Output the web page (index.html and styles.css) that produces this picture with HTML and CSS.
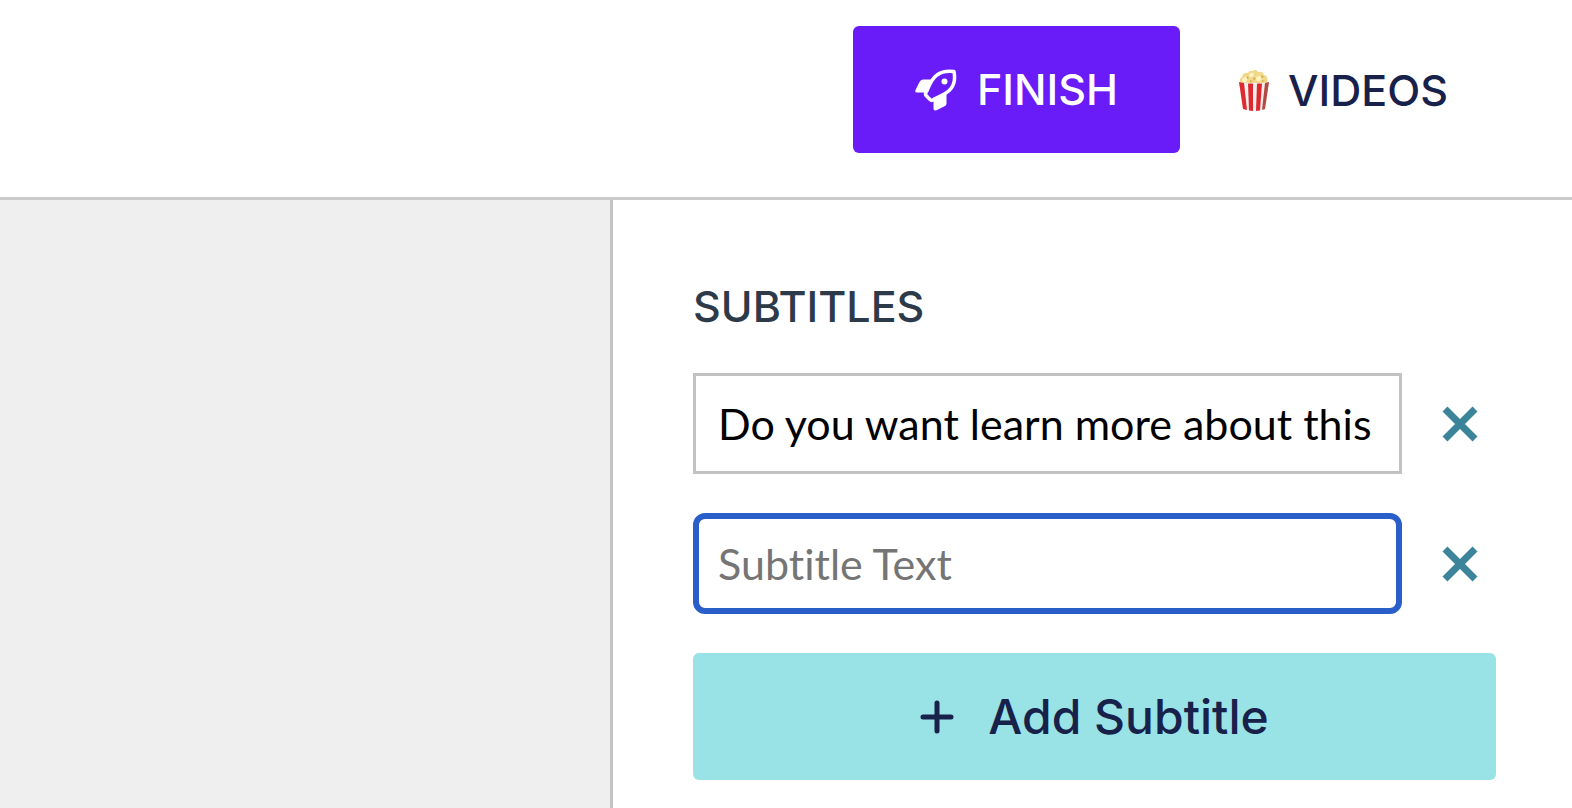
FILE: index.html
```html
<!DOCTYPE html>
<html lang="en">
<head>
    <meta charset="UTF-8">
    <meta name="viewport" content="width=device-width, initial-scale=1.0">
    <title>Subtitles</title>
    <link rel="stylesheet" href="styles.css">
</head>
<body>
    <header class="header">
        <button type="button" class="btn btn-finish">
            <svg class="icon-rocket" viewBox="0 0 42 42" aria-hidden="true">
                <path fill="#fff" d="M8 10.500h11L13 23.500H2Q-.5 23.500.5 21L4.500 13Q5.700 10.500 8 10.500zM31.500 23.500v11Q31.500 36.300 30 37L21 41.500Q18.500 42 18.500 39.500V29z"/>
                <path fill="#691cf7" stroke="#fff" stroke-width="3.500" stroke-linejoin="round" d="M39 2.500Q41 13 36 19.500C32 25 25 27 19 30Q17 32.500 15 30.500L11.500 27Q9.500 25 11.500 22.500C14.500 16 17 9 22 6Q28.500 1 39 2.500z"/>
                <circle cx="29.500" cy="12.500" r="3" fill="#fff"/>
            </svg>
            <span>FINISH</span>
        </button>
        <a href="#" class="videos-link">
            <svg class="icon-popcorn" viewBox="0 0 32 42" aria-hidden="true">
                <path fill="#f1d98c" d="M3 14Q0 10 4 8Q5 3 10 4Q11 1 15 2Q18-1 20 3Q25 2 26 6Q31 7 29 14z"/>
                <path fill="#fff3bf" d="M4 11a3 3 0 0 1 5-2 3 3 0 0 1-4 4zM11 6a3 3 0 0 1 5-1 3 3 0 0 1-4 3zM18 9a3 3 0 0 1 5-1 3 3 0 0 1-4 4z"/>
                <path fill="#d3a84c" d="M9 7l2 2-2 1zM16 8l2 2-3 1zM24 6l2 2-3 1zM12 11l3 1-3 1zM24 11l3 1-3 1z"/>
                <path fill="#f5eeee" d="M1 13Q16 16 31 13L27 40Q16 43 5 40z"/>
                <path fill="#dc2a2e" d="M1 13l5 1 3 27-4-1zM10 14.500h5V42l-4-.5zM19 14.500h5L22 41.500l-4 .5z"/>
                <path fill="#b34a40" d="M27 14l4-1-4 27-3 1z"/>
            </svg>
            <span>VIDEOS</span>
        </a>
    </header>

    <main class="main-content">
        <div class="canvas"></div>

        <!-- Subtitle list -->
        <section class="panel">
            <h2>SUBTITLES</h2>
            <form class="subtitle-form">
                <div class="subtitle-row">
                    <input type="text" class="subtitle-input" aria-label="Subtitle 1" value="Do you want learn more about this">
                    <button type="button" class="btn-remove" aria-label="Remove subtitle 1">
                        <svg viewBox="0 0 36 36" aria-hidden="true"><path d="M3 3l30 30M33 3L3 33"/></svg>
                    </button>
                </div>
                <div class="subtitle-row">
                    <input type="text" class="subtitle-input active" aria-label="Subtitle 2" placeholder="Subtitle Text">
                    <button type="button" class="btn-remove" aria-label="Remove subtitle 2">
                        <svg viewBox="0 0 36 36" aria-hidden="true"><path d="M3 3l30 30M33 3L3 33"/></svg>
                    </button>
                </div>
                <button type="button" class="btn btn-add">
                    <svg class="icon-plus" viewBox="0 0 34 34" aria-hidden="true"><path d="M3 17h28M17 3v28"/></svg>
                    <span>Add Subtitle</span>
                </button>
            </form>
        </section>
    </main>
</body>
</html>
```

FILE: styles.css
```css
* { margin: 0; padding: 0; box-sizing: border-box; }
body {
    font-family: Inter, sans-serif;
    background: #fff;
    color: #17214a;
    min-height: 100vh;
    display: flex;
    flex-direction: column;
}
.header {
    display: flex;
    justify-content: flex-end;
    align-items: center;
    gap: 58px;
    padding: 26px 124px 44px 24px;
    border-bottom: 3px solid #cbcbcb;
}
.btn {
    display: flex;
    align-items: center;
    justify-content: center;
    border: none;
    border-radius: 6px;
    font-family: inherit;
    font-weight: 500;
    line-height: 55px;
    padding: 36px 62px;
    cursor: pointer;
}
.btn-finish {
    background: #691cf7;
    color: #fff;
    font-size: 43px;
    gap: 20px;
}
.icon-rocket { width: 42px; height: 42px; }
.videos-link {
    display: flex;
    align-items: center;
    gap: 18px;
    color: #17214a;
    font-size: 43px;
    font-weight: 500;
    text-decoration: none;
}
.icon-popcorn { width: 32px; height: 42px; }
.main-content {
    flex: 1;
    display: grid;
    grid-template-columns: 39% 1fr;
}
.canvas {
    background: #efefef;
    border-right: 3px solid #c3c3c3;
}
.panel { padding: 80px 76px 26px 80px; }
.panel h2 {
    color: #2c3a4a;
    font-size: 43px;
    font-weight: 500;
    line-height: 52px;
    margin-bottom: 41px;
}
.subtitle-form {
    display: flex;
    flex-direction: column;
    gap: 39px;
}
.subtitle-row {
    display: flex;
    align-items: center;
    gap: 40px;
    padding-right: 18px;
}
.subtitle-input {
    flex: 1;
    min-width: 0;
    height: 101px;
    padding: 0 22px;
    border: 3px solid #c2c2c2;
    background: #fff;
    color: #000;
    font-family: Lato, sans-serif;
    font-size: 43px;
    font-variant-ligatures: none;
    outline: none;
}
.subtitle-input::placeholder { color: #757575; }
.subtitle-input.active {
    padding: 0 19px;
    border: 6px solid #2a5fc9;
    border-radius: 12px;
}
.btn-remove {
    width: 36px;
    height: 36px;
    border: none;
    background: none;
    cursor: pointer;
}
.btn-remove svg {
    display: block;
    fill: none;
    stroke: #3c8499;
    stroke-width: 7;
}
.btn-add {
    background: #99e2e6;
    color: #17214a;
    font-size: 48px;
    gap: 34px;
}
.icon-plus {
    width: 34px;
    height: 34px;
    fill: none;
    stroke: #17214a;
    stroke-width: 5;
    stroke-linecap: round;
}
```
